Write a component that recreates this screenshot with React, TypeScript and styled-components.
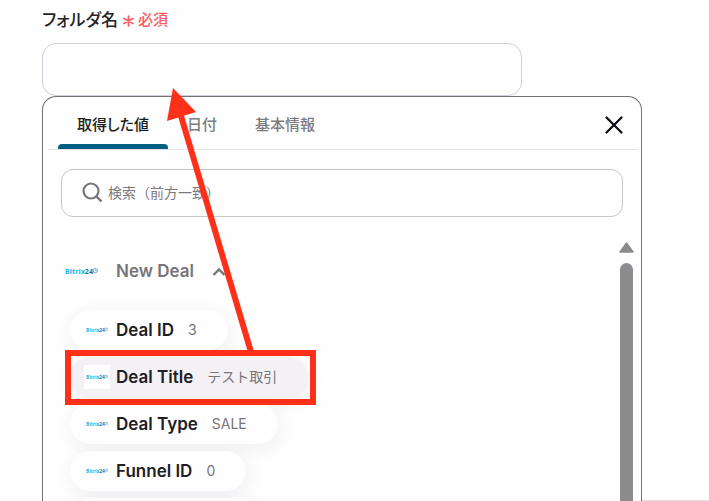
import React from "react";
import styled, { createGlobalStyle } from "styled-components";

const GlobalStyle = createGlobalStyle`
  *, *::before, *::after { box-sizing: border-box; }
  body {
    margin: 0;
    background: #fefefe;
    color: #242428;
    font-family: Inter, "Noto Sans CJK JP", sans-serif;
  }
  button, input { font: inherit; }
`;

const Page = styled.main`
  position: relative;
  display: flex;
  flex-direction: column;
  height: 100vh;
  overflow: hidden;
  padding: 8px 67px 0 42px;
`;

const FieldLabel = styled.label`
  display: flex;
  align-items: center;
  gap: 5px;
  height: 24px;
  margin-bottom: 11px;
  font-size: 17px;
  font-weight: 500;
  line-height: 24px;
  font-feature-settings: "palt";
`;

const Required = styled.span`
  display: flex;
  align-items: center;
  gap: 4px;
  color: #fa5a62;
  font-size: 15px;
`;

const FolderInput = styled.input`
  flex: none;
  width: 80%;
  height: 53px;
  padding: 0 16px;
  border: 1px solid #d0cfdb;
  border-radius: 14px;
  background: #fefefe;
`;

const Panel = styled.section`
  flex: 1;
  min-height: 0;
  display: flex;
  flex-direction: column;
  border: 1px solid #737076;
  border-bottom: 0;
  border-radius: 14px 14px 0 0;
  background: #fefefe;
`;

const PanelHeader = styled.header`
  flex: none;
  display: flex;
  justify-content: space-between;
  height: 53px;
  margin: 0 3px 0 5px;
  padding: 0 11px 0 10px;
  border-bottom: 1px solid #e5e3e8;
`;

const Tabs = styled.div`
  display: flex;
`;

const Tab = styled.button<{ $active?: boolean }>`
  position: relative;
  padding: 4px 19px 0;
  border: 0;
  background: none;
  color: ${(p) => (p.$active ? "#1c1c20" : "#7c7b80")};
  font-size: 15px;
  font-weight: 500;
  line-height: 20px;
  font-feature-settings: "palt";
  white-space: nowrap;

  &::after {
    content: "";
    position: absolute;
    left: 0;
    right: 0;
    bottom: 0;
    height: 5px;
    border-radius: 4px 4px 0 0;
    background: ${(p) => (p.$active ? "#046083" : "transparent")};
  }
`;

const CloseButton = styled.button`
  display: flex;
  align-items: center;
  padding: 4px 4px 0;
  border: 0;
  background: none;
`;

const SearchBox = styled.label`
  flex: none;
  display: flex;
  align-items: center;
  gap: 5px;
  height: 48px;
  margin: 19px 18px 0;
  padding: 0 20px 2px;
  border: 1px solid #c8c6ca;
  border-radius: 12px;
`;

const SearchInput = styled.input`
  flex: 1;
  min-width: 0;
  padding: 0;
  border: 0;
  outline: 0;
  background: none;
  font-size: 14px;

  &::placeholder {
    color: #7b797e;
    opacity: 1;
  }
`;

const Results = styled.div`
  flex: 1;
  min-height: 0;
  display: flex;
  justify-content: space-between;
  margin-top: 21px;
  padding: 0 7px 0 22px;
  overflow: hidden;
`;

const Groups = styled.div`
  flex: 1;
  min-width: 0;
`;

const GroupToggle = styled.button`
  display: flex;
  align-items: center;
  height: 24px;
  margin-top: 21px;
  padding: 0;
  border: 0;
  background: none;
  color: #77757a;
  font-size: 17px;
  font-weight: 600;
  line-height: 24px;
`;

const GroupName = styled.span`
  margin: 0 18px;
`;

const ValueList = styled.ul`
  display: flex;
  flex-direction: column;
  align-items: flex-start;
  gap: 7px;
  margin: 27px 0 0;
  padding: 0 0 0 5px;
  list-style: none;
`;

const ValueChip = styled.button<{ $selected?: boolean }>`
  display: flex;
  align-items: center;
  height: 40px;
  padding: 0 31px 0 14px;
  border: 0;
  border-radius: 20px;
  background: ${(p) => (p.$selected ? "#f3f1f4" : "#fefefe")};
  box-shadow: 2px 4px 18px rgba(70, 50, 85, 0.08);
  white-space: nowrap;
`;

const ChipPlaceholder = styled.li`
  width: 190px;
  height: 40px;
  border-radius: 20px;
  background: #fefefe;
  box-shadow: 2px 4px 18px rgba(70, 50, 85, 0.08);
`;

const LogoTile = styled.span`
  display: flex;
  align-items: center;
  justify-content: center;
  width: 26px;
  height: 24px;
  background: #fefefe;
`;

const ValueName = styled.span`
  margin: 0 14px 0 6px;
  color: #202024;
  font-size: 17px;
  font-weight: 600;
`;

const ValueSample = styled.span`
  height: 20px;
  color: #77757a;
  font-size: 14px;
  line-height: 20px;
`;

const Scrollbar = styled.div`
  display: flex;
  flex-direction: column;
  align-items: center;
  gap: 10px;
  width: 15px;
  padding-top: 4px;
`;

const ScrollThumb = styled.div`
  flex: 1;
  width: 13px;
  border-radius: 7px 7px 0 0;
  background: #8d8b8e;
`;

const PageEdge = styled.div`
  position: absolute;
  right: 0;
  bottom: 0;
  width: 67px;
  height: 1px;
  background: #e0dfe1;
`;

const Callout = styled.svg`
  position: absolute;
  left: 65px;
  top: 88px;
  pointer-events: none;
`;

const BitrixLogo = ({ width }: { width: number }) => (
  <svg width={width} height={width / 4} viewBox="0 0 64 16" role="img" aria-label="Bitrix24">
    <text x="0" y="14" fontFamily="Open Sans, sans-serif" fontSize="14" fontWeight="700" fill="#16b5ee">
      Bitrix<tspan fill="#2a6fa3">24</tspan>
    </text>
    <circle cx="59" cy="7" r="4" fill="none" stroke="#5791b6" strokeWidth="1.5" />
    <path d="M59 4v3h3" fill="none" stroke="#5791b6" strokeWidth="1" />
  </svg>
);

const values = [
  { name: "Deal ID", sample: "3" },
  { name: "Deal Title", sample: "テスト取引", selected: true },
  { name: "Deal Type", sample: "SALE" },
  { name: "Funnel ID", sample: "0" },
];

export default function App() {
  return (
    <>
      <GlobalStyle />
      <Page>
        <FieldLabel htmlFor="folder-name">
          フォルダ名
          <Required>
            <svg width="11" height="16" viewBox="0 0 11 16" aria-hidden="true">
              <path d="M5.5 4v10M1 6.5l9 5M10 6.5l-9 5" stroke="currentColor" strokeWidth="1.7" strokeLinecap="round" />
            </svg>
            必須
          </Required>
        </FieldLabel>
        <FolderInput id="folder-name" type="text" />
        <Panel>
          <PanelHeader>
            <Tabs role="tablist">
              <Tab role="tab" aria-selected="true" $active>取得した値</Tab>
              <Tab role="tab" aria-selected="false">日付</Tab>
              <Tab role="tab" aria-selected="false">基本情報</Tab>
            </Tabs>
            <CloseButton aria-label="閉じる">
              <svg width="18" height="18" viewBox="0 0 18 18" aria-hidden="true">
                <path d="M1.5 1.5l15 15M16.5 1.5l-15 15" stroke="#0c0a12" strokeWidth="2.2" strokeLinecap="round" />
              </svg>
            </CloseButton>
          </PanelHeader>
          <SearchBox>
            <svg width="21" height="21" viewBox="0 0 21 21" fill="none" aria-hidden="true">
              <circle cx="9" cy="9" r="7.5" stroke="#77757a" strokeWidth="2.2" />
              <path d="M14.5 14.5l5 5" stroke="#77757a" strokeWidth="2.4" />
            </svg>
            <SearchInput type="text" aria-label="検索" placeholder="検索（前方一致）" />
          </SearchBox>
          <Results>
            <Groups>
              <GroupToggle aria-expanded="true">
                <BitrixLogo width={33} />
                <GroupName>New Deal</GroupName>
                <svg width="14" height="9" viewBox="0 0 14 9" fill="none" aria-hidden="true">
                  <path d="M1.5 8L7 2.5L12.5 8" stroke="currentColor" strokeWidth="2.4" />
                </svg>
              </GroupToggle>
              <ValueList>
                {values.map((v) => (
                  <li key={v.name}>
                    <ValueChip $selected={v.selected}>
                      <LogoTile><BitrixLogo width={22} /></LogoTile>
                      <ValueName>{v.name}</ValueName>
                      <ValueSample>{v.sample}</ValueSample>
                    </ValueChip>
                  </li>
                ))}
                <ChipPlaceholder aria-hidden="true" />
              </ValueList>
            </Groups>
            <Scrollbar>
              <svg width="15" height="11" viewBox="0 0 15 11" aria-hidden="true">
                <path d="M7.5 1L14 10H1z" fill="#8d8b8e" stroke="#8d8b8e" strokeWidth="1.5" strokeLinejoin="round" />
              </svg>
              <ScrollThumb />
            </Scrollbar>
          </Results>
        </Panel>
        <PageEdge />
        <Callout width="251" height="317" viewBox="0 0 251 317" fill="none" aria-hidden="true">
          <path d="M186 264L116 28" stroke="#ff3019" strokeWidth="6" />
          <path d="M108 0L131 24L102 33z" fill="#ff3019" />
          <rect x="3" y="265" width="245" height="49" stroke="#ff3019" strokeWidth="6" />
        </Callout>
      </Page>
    </>
  );
}
